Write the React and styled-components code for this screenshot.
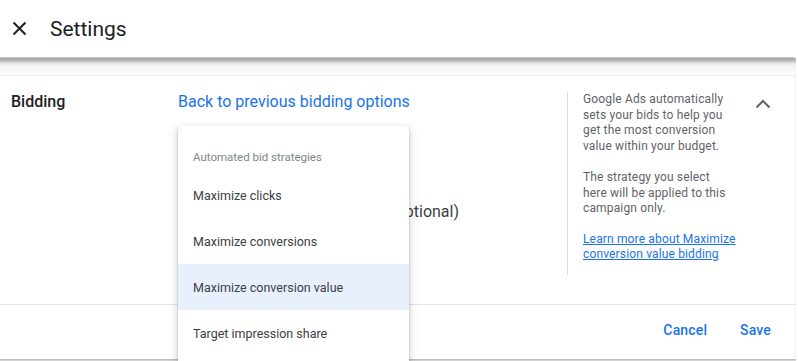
import React from 'react';
import styled, { createGlobalStyle } from 'styled-components';

const GlobalStyle = createGlobalStyle`
  html, body {
    margin: 0;
    padding: 0;
    background: #ffffff;
    overflow: hidden;
  }
  body {
    font-family: Roboto, "Noto Sans", "Liberation Sans", sans-serif;
    color: #202124;
  }
`;

const Page = styled.div`
  width: 796px;
  height: 361px;
  overflow: hidden;
  display: flex;
  flex-direction: column;
`;

const Header = styled.header`
  height: 57px;
  display: flex;
  align-items: center;
  gap: 22px;
  padding-left: 11px;
  box-sizing: border-box;
  flex-shrink: 0;
`;

const CloseButton = styled.button`
  border: none;
  background: none;
  padding: 0;
  width: 17px;
  height: 17px;
  display: flex;
  align-items: center;
  justify-content: center;
  color: #202124;
`;

const Title = styled.h1`
  margin: 0;
  font-size: 21px;
  font-weight: 400;
  color: #202124;
`;

const HeaderShadow = styled.div`
  height: 18px;
  flex-shrink: 0;
  border-radius: 0 3px 0 0;
  background: linear-gradient(
    #c8c8c8 0px,
    #a9a9a9 2px,
    #bdbdbd 4px,
    #e2e2e2 6px,
    #f6f6f6 9px,
    #fbfbfb 17px
  );
  border-bottom: 1px solid #ececec;
`;

const Card = styled.div`
  flex: 1;
  display: flex;
  flex-direction: column;
  border-right: 1px solid #f1f1f1;
`;

const Section = styled.section`
  height: 228px;
  display: flex;
  padding-top: 16px;
  box-sizing: border-box;
  flex-shrink: 0;
`;

const Label = styled.div`
  width: 178px;
  padding-left: 11px;
  box-sizing: border-box;
  font-size: 16px;
  line-height: 20px;
  font-weight: 500;
  color: #202124;
`;

const Main = styled.div`
  width: 389px;
  display: flex;
  flex-direction: column;
`;

const BlueLink = styled.a`
  font-size: 16px;
  line-height: 20px;
  color: #1a73e8;
  text-decoration: none;
  cursor: pointer;
`;

const SelectWrap = styled.div`
  position: relative;
  margin-top: 14px;
  width: 231px;
  z-index: 2;
`;

const SelectBox = styled.div`
  height: 56px;
  border: 2px solid #1a73e8;
  border-radius: 5px;
  box-sizing: border-box;
`;

const Menu = styled.ul`
  position: absolute;
  top: 0;
  left: 0;
  width: 231px;
  margin: 0;
  padding: 0 0 40px;
  list-style: none;
  background: #ffffff;
  border-radius: 4px 4px 0 0;
  box-shadow: 0 2px 3px rgba(60, 64, 67, 0.3), 0 3px 8px 2px rgba(60, 64, 67, 0.15);
`;

const MenuHeader = styled.li`
  height: 46px;
  padding: 16px 0 0 15px;
  box-sizing: border-box;
  display: flex;
  align-items: center;
  font-size: 11.5px;
  color: #80868b;
`;

const MenuItem = styled.li`
  height: 46px;
  padding-left: 15px;
  display: flex;
  align-items: center;
  font-size: 12.5px;
  color: #3c4043;
  background: ${({ $active }) => ($active ? '#e8f0fe' : 'transparent')};
`;

const OptionRow = styled.label`
  width: 281px;
  margin-top: 20px;
  display: flex;
  justify-content: flex-end;
  align-items: center;
  gap: 14px;
  font-size: 16px;
  line-height: 20px;
  color: #3c4043;
  white-space: nowrap;
`;

const CheckBox = styled.span`
  width: 16px;
  height: 16px;
  border: 2px solid #5f6368;
  border-radius: 2px;
`;

const Help = styled.aside`
  width: 178px;
  height: 183px;
  border-left: 1px solid #dadce0;
  padding-left: 15px;
  box-sizing: border-box;
  font-size: 12px;
  line-height: 15.5px;
  color: #5f6368;
  letter-spacing: 0.15px;
`;

const HelpText = styled.p`
  margin: 0 0 ${({ $gap }) => $gap}px;
  width: ${({ $width }) => $width}px;
`;

const HelpLink = styled.a`
  color: #1a73e8;
  text-decoration: underline;
  cursor: pointer;
`;

const ToggleButton = styled.button`
  margin-left: 6px;
  width: 24px;
  height: 24px;
  padding: 0;
  border: none;
  background: none;
  display: flex;
  align-items: center;
  justify-content: center;
  align-self: flex-start;
`;

const Footer = styled.footer`
  height: 51px;
  border-top: 1px solid #e3e3e3;
  display: flex;
  justify-content: flex-end;
  align-items: center;
  gap: 9px;
  padding-right: 12px;
  padding-bottom: 1px;
  box-sizing: border-box;
  flex-shrink: 0;
`;

const TextButton = styled.button`
  border: none;
  background: none;
  padding: 8px 12px;
  font-family: inherit;
  font-size: 14px;
  font-weight: 500;
  color: #1a73e8;
  letter-spacing: 0.15px;
`;

const BottomShadow = styled.div`
  height: 2px;
  background: linear-gradient(#b5b5b5, #dcdcdc);
  flex-shrink: 0;
`;

const CloseIcon = () => (
  <svg width="15" height="15" viewBox="0 0 15 15">
    <path d="M1.5 1.5 L13.5 13.5 M13.5 1.5 L1.5 13.5" stroke="#202124" strokeWidth="2" fill="none" />
  </svg>
);

const ChevronUp = () => (
  <svg width="16" height="10" viewBox="0 0 16 10">
    <path d="M1.5 8.5 L8 2 L14.5 8.5" stroke="#5f6368" strokeWidth="2" fill="none" />
  </svg>
);

const strategies = [
  'Maximize clicks',
  'Maximize conversions',
  'Maximize conversion value',
  'Target impression share',
];

const App = () => (
  <Page>
    <GlobalStyle />
    <Header>
      <CloseButton aria-label="Close">
        <CloseIcon />
      </CloseButton>
      <Title>Settings</Title>
    </Header>
    <HeaderShadow />
    <Card>
      <Section>
        <Label>Bidding</Label>
        <Main>
          <BlueLink>Back to previous bidding options</BlueLink>
          <SelectWrap>
            <SelectBox />
            <Menu>
              <MenuHeader>Automated bid strategies</MenuHeader>
              {strategies.map((s) => (
                <MenuItem key={s} $active={s === 'Maximize conversion value'}>{s}</MenuItem>
              ))}
            </Menu>
          </SelectWrap>
          <OptionRow>
            <CheckBox />
            Set a target ROAS (optional)
          </OptionRow>
        </Main>
        <Help>
          <HelpText $gap={16} $width={158}>
            Google Ads automatically sets your bids to help you get the most conversion value within your budget.
          </HelpText>
          <HelpText $gap={15} $width={146}>
            The strategy you select here will be applied to this campaign only.
          </HelpText>
          <HelpText $gap={0} $width={158}>
            <HelpLink>Learn more about Maximize conversion value bidding</HelpLink>
          </HelpText>
        </Help>
        <ToggleButton aria-label="Collapse">
          <ChevronUp />
        </ToggleButton>
      </Section>
      <Footer>
        <TextButton>Cancel</TextButton>
        <TextButton>Save</TextButton>
      </Footer>
    </Card>
    <BottomShadow />
  </Page>
);

export default App;
